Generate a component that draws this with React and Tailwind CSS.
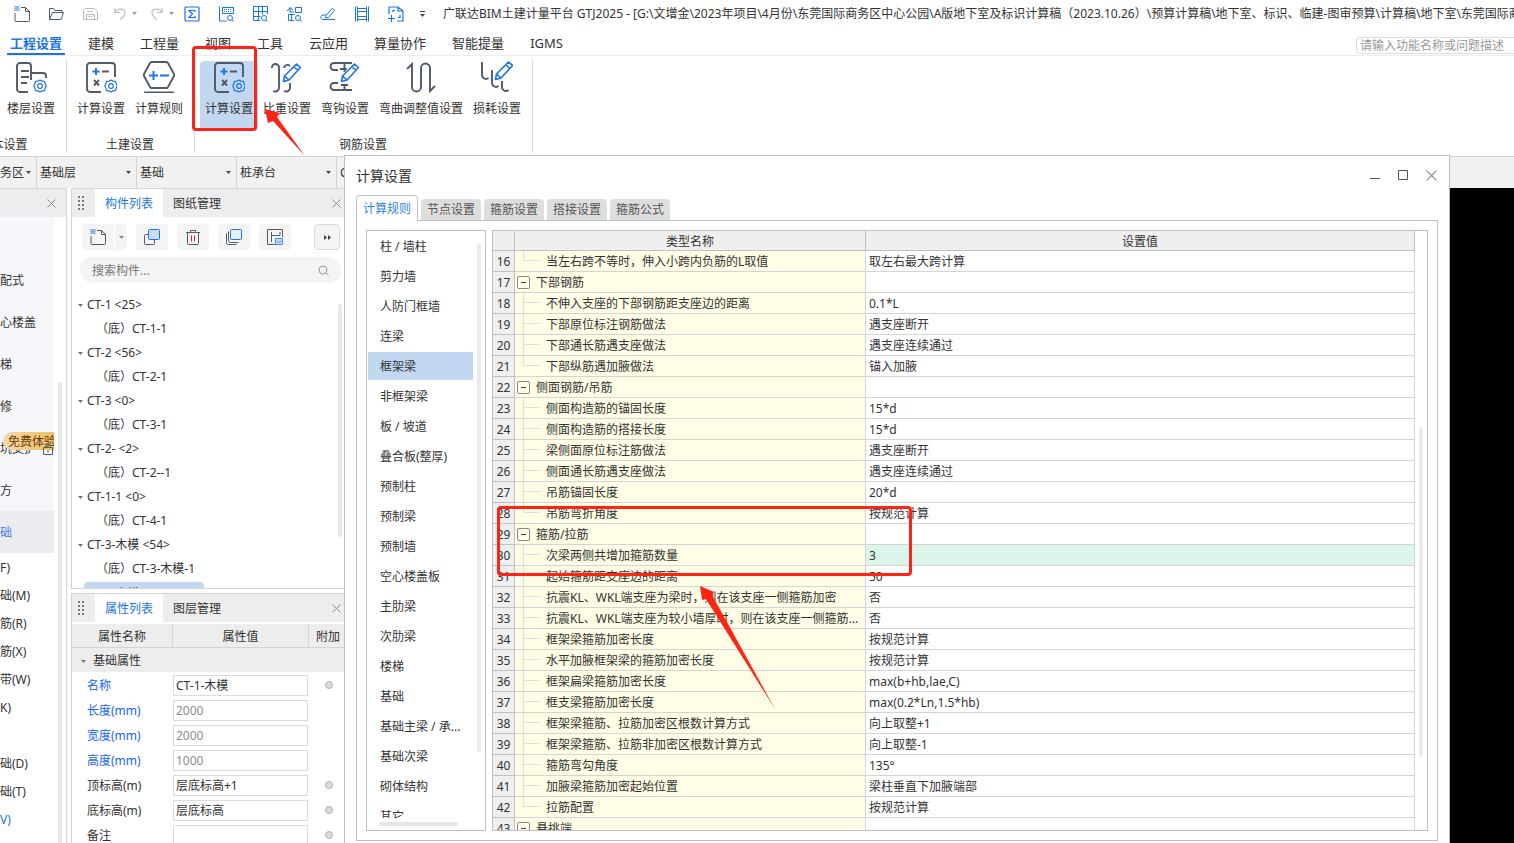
import React, { useState } from 'react';

const INK = '#505a6b';
const BLUE = '#1a73e8';

/* ---------- icons ---------- */

const Icon = ({ size = 16, box = 16, stroke = INK, width = 1, className = '', children }) => (
  <svg
    width={size}
    height={size}
    viewBox={`0 0 ${box} ${box}`}
    fill="none"
    stroke={stroke}
    strokeWidth={width}
    className={`shrink-0 ${className}`}
    aria-hidden="true"
  >
    {children}
  </svg>
);

const Caret = ({ className = '' }) => (
  <svg width="5" height="3" viewBox="0 0 5 3" className={`shrink-0 ${className}`} aria-hidden="true">
    <path d="M0 0h5L2.5 3z" fill="currentColor" />
  </svg>
);

const CloseIcon = ({ size = 9 }) => (
  <Icon size={size} box={9} stroke="#8c8c8c"><path d="M.5 .5l8 8M8.5 .5l-8 8" /></Icon>
);

const Grip = () => (
  <svg width="7" height="15" viewBox="0 0 7 15" fill="#7a7a7a" className="shrink-0" aria-hidden="true">
    {[0, 4, 8, 12].map(y => (
      <g key={y}><rect x="0" y={y} width="2" height="2" /><rect x="4" y={y} width="2" height="2" /></g>
    ))}
  </svg>
);

const NewIcon = () => (
  <Icon>
    <path d="M7 1.5h4.500l4 4v9a1 1 0 0 1-1 1H2a1 1 0 0 1-1-1V7M11.5 1.5v4h4" />
    <path d="M.5 .5h1M2.5 .5h1M4.5 .5h1M1.5 1.5h1M3.5 1.5h1M.5 2.5h1M2.5 2.5h1M4.5 2.5h1M1.5 3.5h1M3.5 3.5h1M.5 4.5h1M2.5 4.5h1M4.5 4.5h1" stroke={BLUE} />
  </Icon>
);
const OpenIcon = () => (
  <Icon><path d="M1.5 13.5v-11h4l1.5 2h7v2M1.5 13.5l3-7h11l-2.5 7z" strokeLinejoin="round" /></Icon>
);
const SaveIcon = () => (
  <Icon stroke="#bdbdbd"><path d="M3.5 2.5h9l3 3v8h-14v-9zM4.5 13.5v-5h8v5M5 5.5h6M6.5 10.5h4" /></Icon>
);
const UndoIcon = () => (
  <Icon stroke="#bdbdbd" width={1.2}><path d="M3 2v4.5h5M3 6.5C5 2.5 13 1.5 13 7c0 3-2.500 4.500-5 6.500" /></Icon>
);
const RedoIcon = () => (
  <Icon stroke="#bdbdbd" width={1.2}><path d="M13 2v4.500H8M13 6.500C11 2.500 3 1.500 3 7c0 3 2.500 4.500 5 6.500" /></Icon>
);
const SumIcon = () => (
  <Icon stroke={BLUE} width={1.2}><rect x="1" y="1" width="14" height="14" rx="1" /><path d="M11 6V4.500H5L8.500 8 5 11.500h6V10" /></Icon>
);
const SheetFindIcon = () => (
  <Icon stroke={BLUE}>
    <path d="M1.500 .5v14.500h7M4.500 1.500h11v6h-11zM6 3.500h1M8 3.500h1M10 3.500h1M12 3.500h1M6 5.500h1M8 5.500h1M10 5.500h1M12 5.500h1" />
    <circle cx="12" cy="12" r="2.500" /><path d="M14 14l1.500 1.500" />
  </Icon>
);
const GridFindIcon = () => (
  <Icon stroke={BLUE}>
    <path d="M8 14.500H1.500v-14h14V8M1.500 5.500h14M1.500 10.500h7M6.500 .5v14M10.500 .5v8" />
    <circle cx="12" cy="12" r="2.500" /><path d="M14 14l1.500 1.500" />
  </Icon>
);
const RebarFindIcon = () => (
  <Icon stroke={BLUE}>
    <path d="M8 14.500H2.500v-6h6M5.500 8.500v6M9.500 1.500h6v5h-6zM1 5l3-3 3 2M4 1v5h4" />
    <circle cx="12" cy="12" r="2.500" /><path d="M14 14l1.500 1.500" />
  </Icon>
);
const PenIcon = () => (
  <Icon stroke={BLUE}><path d="M12 2.500l2.500 2-6 7-3 .5.5-2.500zM6 9H3c-3 0-3 4.500 0 4.500h12" /></Icon>
);
const BeamIcon = () => (
  <Icon stroke={BLUE}><path d="M1.500 .5v15M3.500 .5v15M12.500 .5v15M14.500 .5v15M3.500 2.500h9M3.500 5.500h9M3.500 10.500h9M3.500 13.500h9" /></Icon>
);
const FrameIcon = () => (
  <Icon stroke={BLUE} width={1.200}><path d="M1 8V1h9l5 4v10H9M3.500 9v7M0 12.500h7M5 6V4.500h2M12 9v2.500h-2M10 1v4h5" /></Icon>
);

const Gear = ({ x, y }) => (
  <g transform={`translate(${x} ${y})`} stroke={BLUE} strokeWidth="1.2">
    <path d="M-2-4.900L0-6l2 1.100 2.500.3.7 2.400L6.200 0 5.200 2.200l-.7 2.400L2 4.900 0 6l-2-1.100-2.500-.3-.7-2.400L-6.200 0l1-2.200.7-2.400z" strokeLinejoin="round" />
    <circle r="2.300" />
  </g>
);
const Pencil = ({ x, y }) => (
  <g transform={`translate(${x} ${y})`} stroke={BLUE} strokeWidth="1.6" strokeLinejoin="round">
    <path d="M13.500 0l4 3.500L6 16l-5.500 1.500L1.500 12zM11 3l4 3.500M1.500 12L6 16" />
  </g>
);

const FloorIcon = () => (
  <Icon size={32} box={32} width={1.900}>
    <path d="M13 31H5a3 3 0 0 1-3-3V5a3 3 0 0 1 3-3h8a3 3 0 0 1 3 3v14M16 12h12a3 3 0 0 1 3 3v2M6 10h8M6 16h8M6 22h6" />
    <Gear x={25} y={25} />
  </Icon>
);
const CalcIcon = () => (
  <Icon size={32} box={32} width={1.900}>
    <path d="M16 31H5a3 3 0 0 1-3-3V5a3 3 0 0 1 3-3h22a3 3 0 0 1 3 3v11M17 10.500h7M9 19l5 5.500M14 19l-5 5.500" />
    <path d="M7.500 10.500h7M11 7v7" stroke={BLUE} />
    <Gear x={26} y={25} />
  </Icon>
);
const RuleIcon = () => (
  <Icon size={32} box={32} width={1.900}>
    <path d="M9 2h14a2 2 0 0 1 2 1l6 11a2 2 0 0 1 0 2l-6 11a2 2 0 0 1-2 1H9a2 2 0 0 1-2-1L1 16a2 2 0 0 1 0-2L7 3a2 2 0 0 1 2-1zM1 32.500h30" transform="translate(0 -1)" />
    <path d="M6 14.500h9M10.500 10v9M17 14.500h9" stroke={BLUE} />
  </Icon>
);
const WeightIcon = () => (
  <Icon size={32} box={32} width={1.900}>
    <path d="M1 7a3.500 3.500 0 0 1 7-1v20a4 4 0 0 1-6 4M13 7a3.500 3.500 0 0 1 6-2M19 22v4a4 4 0 0 1-6 4" />
    <Pencil x={12} y={3} />
  </Icon>
);
const HookIcon = () => (
  <Icon size={32} box={32} width={1.900}>
    <path d="M9 9H5a3.500 3.500 0 0 1 0-7h18M15.500 3v8M11 8h7M9 22H5a3.500 3.500 0 0 0 0 7h18M15.500 29v-5M12 24h7" />
    <Pencil x={12} y={3} />
  </Icon>
);
const BendIcon = () => (
  <Icon size={32} box={32} width={1.900}>
    <path d="M2 8l5-5v23a4.500 4.500 0 0 0 9 0V7a4.500 4.500 0 0 1 9 0v23l5-5" />
  </Icon>
);
const LossIcon = () => (
  <Icon size={32} box={32} width={1.900}>
    <path d="M1 1v13a4 4 0 0 0 6.500 3M11 9v13a4 4 0 0 0 6.500 3M21 20v7a4 4 0 0 0 6.500 2" />
    <Pencil x={14} y={1} />
  </Icon>
);

const CopyIcon = () => (
  <Icon><path d="M5 5.500H1.500a1 1 0 0 0-1 1v8a1 1 0 0 0 1 1h8a1 1 0 0 0 1-1V11" /><rect x="4.500" y=".5" width="11" height="10" rx="1" fill="#c9dcf8" stroke={BLUE} /></Icon>
);
const TrashIcon = () => (
  <Icon><path d="M1 3.500h14M5.500 3V1.500h5V3M2.500 4v10.500a1 1 0 0 0 1 1h9a1 1 0 0 0 1-1V4" /><path d="M6.500 6.500v6M9.500 6.500v6" stroke="#e02020" /></Icon>
);
const LayersIcon = () => (
  <Icon><path d="M.5 4.500v9a2 2 0 0 0 2 2h8M2.500 2.500v9a2 2 0 0 0 2 2h8" /><rect x="4.500" y=".5" width="11" height="10" rx="1" fill="#e3f0ff" stroke={BLUE} /></Icon>
);
const StoreIcon = () => (
  <Icon><path d="M8 15.500H.5V.5h15V8M4.500 3v10M4.500 6.500H13V3" /><path d="M8.500 9.500h7v6h-7zM10 12l2 1.500 2-1.500" stroke="#3b8cf0" fill="#c9dcf8" /></Icon>
);

/* ---------- data ---------- */

const MENUS = ['工程设置', '建模', '工程量', '视图', '工具', '云应用', '算量协作', '智能提量', 'IGMS'];

const CATEGORIES = [
  '柱 / 墙柱', '剪力墙', '人防门框墙', '连梁', '框架梁', '非框架梁', '板 / 坡道', '叠合板(整厚)', '预制柱', '预制梁',
  '预制墙', '空心楼盖板', '主肋梁', '次肋梁', '楼梯', '基础', '基础主梁 / 承...', '基础次梁', '砌体结构', '其它'
];

const RULES = [
  { name: '当左右跨不等时，伸入小跨内负筋的L取值', value: '取左右最大跨计算', last: true },
  { name: '下部钢筋', group: true },
  { name: '不伸入支座的下部钢筋距支座边的距离', value: '0.1*L' },
  { name: '下部原位标注钢筋做法', value: '遇支座断开' },
  { name: '下部通长筋遇支座做法', value: '遇支座连续通过' },
  { name: '下部纵筋遇加腋做法', value: '锚入加腋', last: true },
  { name: '侧面钢筋/吊筋', group: true },
  { name: '侧面构造筋的锚固长度', value: '15*d' },
  { name: '侧面构造筋的搭接长度', value: '15*d' },
  { name: '梁侧面原位标注筋做法', value: '遇支座断开' },
  { name: '侧面通长筋遇支座做法', value: '遇支座连续通过' },
  { name: '吊筋锚固长度', value: '20*d' },
  { name: '吊筋弯折角度', value: '按规范计算', last: true },
  { name: '箍筋/拉筋', group: true },
  { name: '次梁两侧共增加箍筋数量', value: '3', active: true },
  { name: '起始箍筋距支座边的距离', value: '50' },
  { name: '抗震KL、WKL端支座为梁时，则在该支座一侧箍筋加密', value: '否' },
  { name: '抗震KL、WKL端支座为较小墙厚时，则在该支座一侧箍筋...', value: '否' },
  { name: '框架梁箍筋加密长度', value: '按规范计算' },
  { name: '水平加腋框架梁的箍筋加密长度', value: '按规范计算' },
  { name: '框架扁梁箍筋加密长度', value: 'max(b+hb,lae,C)' },
  { name: '框支梁箍筋加密长度', value: 'max(0.2*Ln,1.5*hb)' },
  { name: '框架梁箍筋、拉筋加密区根数计算方式', value: '向上取整+1' },
  { name: '框架梁箍筋、拉筋非加密区根数计算方式', value: '向上取整-1' },
  { name: '箍筋弯勾角度', value: '135°' },
  { name: '加腋梁箍筋加密起始位置', value: '梁柱垂直下加腋端部' },
  { name: '拉筋配置', value: '按规范计算', last: true },
  { name: '悬挑端', group: true }
];

const COMPONENTS = [
  ['CT-1 <25>', '（底）CT-1-1'],
  ['CT-2 <56>', '（底）CT-2-1'],
  ['CT-3 <0>', '（底）CT-3-1'],
  ['CT-2- <2>', '（底）CT-2--1'],
  ['CT-1-1 <0>', '（底）CT-4-1'],
  ['CT-3-木模 <54>', '（底）CT-3-木模-1']
];

const PROPS = [
  { id: 'name', label: '名称', value: 'CT-1-木模', key: true, dot: true },
  { id: 'length', label: '长度(mm)', value: '2000', key: true, muted: true },
  { id: 'width', label: '宽度(mm)', value: '2000', key: true, muted: true },
  { id: 'height', label: '高度(mm)', value: '1000', key: true, muted: true },
  { id: 'top', label: '顶标高(m)', value: '层底标高+1', dot: true },
  { id: 'bottom', label: '底标高(m)', value: '层底标高', dot: true },
  { id: 'remark', label: '备注', value: '', dot: true }
];

/* ---------- header ---------- */

const QuickBar = () => (
  <div className="flex h-[27px] items-center overflow-hidden whitespace-nowrap pl-[14px]">
    <div className="flex shrink-0 items-center gap-[18px]">
      <button aria-label="新建"><NewIcon /></button>
      <button aria-label="打开"><OpenIcon /></button>
      <button aria-label="保存"><SaveIcon /></button>
    </div>
    <div className="ml-[14px] flex shrink-0 items-center gap-3 text-[#999]">
      <button aria-label="撤销" className="flex items-center gap-1"><UndoIcon /><Caret /></button>
      <button aria-label="恢复" className="flex items-center gap-1"><RedoIcon /><Caret /></button>
    </div>
    <div className="ml-[10px] flex shrink-0 items-center gap-[18px]">
      <button aria-label="汇总计算"><SumIcon /></button>
      <button aria-label="查看报表"><SheetFindIcon /></button>
      <button aria-label="查看工程量"><GridFindIcon /></button>
      <button aria-label="查看钢筋量"><RebarFindIcon /></button>
      <button aria-label="编辑"><PenIcon /></button>
      <button aria-label="钢筋三维"><BeamIcon /></button>
      <button aria-label="识别"><FrameIcon /></button>
    </div>
    <button aria-label="更多" className="ml-4 flex w-[5px] shrink-0 flex-col gap-[2px] text-[#444]">
      <span className="h-px w-full bg-[#444]" />
      <Caret />
    </button>
    <span className="ml-[18px]">
      广联达BIM土建计量平台 GTJ2025 - [G:\文增金\2023年项目\4月份\东莞国际商务区中心公园\A版地下室及标识计算稿（2023.10.26）\预算计算稿\地下室、标识、临建-图审预算\计算稿\地下室\东莞国际商务区
    </span>
  </div>
);

const MenuBar = () => (
  <nav className="flex h-[29px] items-end justify-between border-b border-[#ececec]">
    <div className="flex h-full items-stretch gap-5 pl-[7px] text-[13px]">
      {MENUS.map((m, i) => (
        <button
          key={m}
          className={i === 0 ? 'border-b-2 border-[#1a73e8] px-[3px] pt-[7px] font-bold text-[#1a73e8]' : 'border-b-2 border-transparent px-[3px] pt-[7px]'}
        >
          {m}
        </button>
      ))}
    </div>
    <input
      aria-label="功能搜索"
      placeholder="请输入功能名称或问题描述"
      className="mb-px h-[17px] w-[158px] rounded-l-sm border border-r-0 border-[#dcdcdc] pl-[3px] text-[12px] placeholder:text-[#999]"
    />
  </nav>
);

const Tool = ({ icon, label, active }) => (
  <button className={`flex h-[70px] shrink-0 flex-col items-center gap-[6px] rounded-sm px-[5px] ${active ? 'bg-[#c1d8f0]' : ''}`}>
    {icon}
    <span className="leading-5">{label}</span>
  </button>
);

const ToolGroup = ({ title, className = '', children }) => (
  <section className={`flex shrink-0 flex-col justify-between border-r border-[#dcdcdc] pr-[6px] pl-[5px] ${className}`}>
    <div className="flex justify-end pt-[2px]">{children}</div>
    <h2 className="text-center leading-4">{title}</h2>
  </section>
);

const Ribbon = () => (
  <div className="flex h-[100px] items-start overflow-hidden pt-[3px]">
    <div className="flex h-[94px]">
      <ToolGroup title="基本设置" className="-ml-[58px] w-[125px]">
        <Tool icon={<FloorIcon />} label="楼层设置" />
      </ToolGroup>
      <ToolGroup title="土建设置">
        <Tool icon={<CalcIcon />} label="计算设置" />
        <Tool icon={<RuleIcon />} label="计算规则" />
      </ToolGroup>
      <ToolGroup title="钢筋设置">
        <Tool icon={<CalcIcon />} label="计算设置" active />
        <Tool icon={<WeightIcon />} label="比重设置" />
        <Tool icon={<HookIcon />} label="弯钩设置" />
        <Tool icon={<BendIcon />} label="弯曲调整值设置" />
        <Tool icon={<LossIcon />} label="损耗设置" />
      </ToolGroup>
    </div>
  </div>
);

const Picker = ({ label, value, className = 'w-[100px]' }) => (
  <div className={`flex shrink-0 items-center border-r border-[#d4d4d4] pr-[5px] ${className}`}>
    <select aria-label={label} className="h-full min-w-0 flex-1 appearance-none bg-transparent pl-[3px]">
      <option>{value}</option>
    </select>
    <Caret className="text-[#444]" />
  </div>
);

const PickerBar = () => (
  <div className="flex h-8 shrink-0 border-t border-[#d4d4d4] bg-[#f1f1f1]">
    <Picker label="区域" value="务区" className="-ml-[3px] w-10" />
    <Picker label="楼层" value="基础层" />
    <Picker label="构件类型" value="基础" />
    <Picker label="构件" value="桩承台" />
    <Picker label="名称" value="CT-1-木模" />
  </div>
);

/* ---------- side panels ---------- */

const NavPanel = () => (
  <aside className="flex w-[67px] shrink-0 flex-col overflow-hidden whitespace-nowrap border-r border-t border-[#d4d4d4]">
    <div className="flex h-7 shrink-0 items-center justify-end bg-[#ededef] pr-[10px]">
      <button aria-label="关闭导航"><CloseIcon /></button>
    </div>
    <div className="flex flex-1">
      <div className="w-[54px] shrink-0">
        <div className="bg-[#f5f7fa] pt-[42px]">
          {['配式', '心楼盖', '梯', '修'].map(t => <div key={t} className="h-[42px] leading-[44px]">{t}</div>)}
          <div className="relative h-[42px] leading-[44px]">
            坑支护
            <span className="absolute top-[5px] right-0 h-[18px] w-[51px] overflow-hidden rounded-l-full bg-linear-to-r from-[#f6d9a8] to-[#ecbf62] pl-[5px] text-[12px] leading-[20px] text-[#6b3d0c]">免费体验</span>
            <Icon size={12} box={12} className="absolute right-0 bottom-[14px]"><path d="M1.500 4.500h9v7h-9zM3.500 4.500v-1a2.500 2.500 0 0 1 5 0v1M6 7v2.500" /></Icon>
          </div>
          <div className="h-[42px] leading-[44px]">方</div>
        </div>
        <div className="h-[42px] bg-[#ebecf0] leading-[44px] text-[#4a7de0]">础</div>
        {['F)', '础(M)', '筋(R)', '筋(X)', '带(W)', 'K)', '', '础(D)', '础(T)'].map((t, i) => (
          <div key={i} className="h-7 leading-[30px]">{t}</div>
        ))}
        <div className="h-7 leading-[30px] text-[#1a73e8]">V)</div>
      </div>
      <div className="mt-[165px] ml-1 w-1 rounded-t bg-[#e8e8e8]" />
    </div>
  </aside>
);

const PanelTabs = ({ tabs }) => (
  <div className="flex h-7 shrink-0 items-center bg-[#ededef] pr-[3px] pl-[6px]">
    <Grip />
    <div className="ml-[10px] flex h-full flex-1">
      {tabs.map((t, i) => (
        <button key={t} className={i === 0 ? 'bg-white px-[10px] pt-[2px] text-[#1a73e8]' : 'px-[10px] pt-[2px]'}>{t}</button>
      ))}
    </div>
    <button aria-label="关闭"><CloseIcon /></button>
  </div>
);

const SmallTool = ({ label, className = 'w-8 rounded', children }) => (
  <button aria-label={label} className={`flex h-[26px] items-center justify-center bg-[#f4f4f4] ${className}`}>{children}</button>
);

const ComponentPanel = () => (
  <section className="flex h-[401px] shrink-0 flex-col border border-r-0 border-[#d4d4d4] bg-white">
    <PanelTabs tabs={['构件列表', '图纸管理']} />
    <div className="mt-[7px] flex items-center gap-[9px] pr-1 pl-[10px]">
      <div className="flex gap-px">
        <SmallTool label="新建构件" className="w-8 rounded-l"><NewIcon /></SmallTool>
        <SmallTool label="新建选项" className="w-3 rounded-r text-[#888]"><Caret /></SmallTool>
      </div>
      <SmallTool label="复制"><CopyIcon /></SmallTool>
      <SmallTool label="删除"><TrashIcon /></SmallTool>
      <SmallTool label="层间复制"><LayersIcon /></SmallTool>
      <SmallTool label="存档"><StoreIcon /></SmallTool>
      <SmallTool label="更多" className="ml-auto w-[26px] rounded border border-[#dcdcdc]">
        <svg width="7" height="5" viewBox="0 0 7 5" fill="#444" aria-hidden="true"><path d="M0 0l3 2.500L0 5zM4 0l3 2.500L4 5z" /></svg>
      </SmallTool>
    </div>
    <div className="mt-[7px] mr-[3px] ml-2 flex h-[26px] shrink-0 items-center rounded-full bg-[#f4f4f4] pr-3 pl-3">
      <input aria-label="搜索构件" placeholder="搜索构件..." className="min-w-0 flex-1 bg-transparent pt-[2px] placeholder:text-[#777]" />
      <Icon size={11} box={11} stroke="#999"><circle cx="5" cy="5" r="4" /><path d="M8 8l2.500 2.500" /></Icon>
    </div>
    <div className="mt-[10px] flex min-h-0 flex-1 overflow-hidden">
      <ul className="flex-1">
        {COMPONENTS.map(([parent, child]) => (
          <li key={parent}>
            <div className="flex h-6 items-center gap-1 pl-[6px]"><Caret className="text-[#777]" />{parent}</div>
            <div className="flex h-6 items-center pl-6">{child}</div>
          </li>
        ))}
        <li className="mt-px ml-3 h-6 w-[120px] rounded bg-[#c1d8f0] pl-[3px] leading-6">CT-1-木模 &lt;9&gt;</li>
      </ul>
      <div className="mt-[11px] mr-[2px] h-[233px] w-1 rounded bg-[#e8e8e8]" />
    </div>
  </section>
);

const PropertyPanel = () => (
  <section className="mt-1 flex min-h-0 flex-1 flex-col overflow-hidden border-t border-l border-[#d4d4d4] bg-white">
    <PanelTabs tabs={['属性列表', '图层管理']} />
    <table className="mt-[2px] w-full table-fixed border-separate border-spacing-0">
      <colgroup><col className="w-[101px]" /><col className="w-[136px]" /><col /></colgroup>
      <thead className="bg-[#ededed]">
        <tr className="h-6">
          <th className="border-r border-b border-[#d4d4d4] pt-[2px] font-normal">属性名称</th>
          <th className="border-r border-b border-[#d4d4d4] pt-[2px] font-normal">属性值</th>
          <th className="border-b border-[#d4d4d4] pt-[2px] pl-[3px] font-normal whitespace-nowrap">附加</th>
        </tr>
      </thead>
      <tbody>
        <tr className="h-6 bg-[#ededed]">
          <td colSpan={3} className="pt-[2px]"><span className="flex items-center gap-[7px] pl-[9px]"><Caret className="text-[#777]" />基础属性</span></td>
        </tr>
        {PROPS.map(p => (
          <tr key={p.id} className="h-[25px]">
            <td className={p.key ? 'pt-[2px] pl-[15px] text-[#1463ff]' : 'pt-[2px] pl-[15px]'}><label htmlFor={p.id}>{p.label}</label></td>
            <td>
              <input
                id={p.id}
                defaultValue={p.value}
                className={`mt-px block h-[21px] w-[135px] border border-[#dcdcdc] pl-[2px] ${p.muted ? 'text-[#8c8c8c]' : ''}`}
              />
            </td>
            <td>{p.dot && <input type="checkbox" aria-label={`${p.label}附加`} className="ml-4 block h-2 w-2 appearance-none rounded-full border border-[#b0b0b0] bg-[#dcdcdc]" />}</td>
          </tr>
        ))}
      </tbody>
    </table>
  </section>
);

/* ---------- dialog ---------- */

const Branch = ({ last }) => (
  <span className="mr-[6px] ml-2 flex h-5 w-[17px] shrink-0 flex-col">
    <span className="h-[10px] border-b border-l border-[#dedede]" />
    <span className={last ? 'flex-1' : 'flex-1 border-l border-[#dedede]'} />
  </span>
);

const RuleTable = () => (
  <div className="flex min-w-0 flex-1 overflow-hidden border border-[#c0c0c4]">
    <div className="min-w-0 flex-1">
      <table className="w-full table-fixed border-separate border-spacing-0 whitespace-nowrap">
        <colgroup><col className="w-[22px]" /><col className="w-[351px]" /><col /></colgroup>
        <thead className="bg-[#efefef]">
          <tr className="h-5">
            <th className="border-r border-b border-[#c0c0c4]" aria-label="序号" />
            <th className="border-r border-b border-[#c0c0c4] pt-[2px] font-normal leading-[17px]">类型名称</th>
            <th className="border-r border-b border-[#c0c0c4] pt-[2px] font-normal leading-[17px]">设置值</th>
          </tr>
        </thead>
        <tbody>
          {RULES.map((r, i) => (
            <tr key={i} className="h-[21px]">
              <td className="border-r border-b border-[#c0c0c4] bg-[#efefef] pt-[2px] text-center leading-[18px]">{i + 16}</td>
              <td className="border-r border-b border-[#d4d4d4] bg-[#fffde5]">
                <span className="flex h-5 items-center overflow-hidden leading-[18px]">
                  {r.group ? (
                    <button aria-label="折叠" className="mr-[6px] ml-[2px] flex h-[13px] w-[13px] shrink-0 items-center justify-center rounded-xs border border-[#888] bg-[#fffde5]">
                      <span className="h-px w-[5px] bg-[#444]" />
                    </button>
                  ) : (
                    <Branch last={r.last} />
                  )}
                  <span className="pt-[2px]">{r.name}</span>
                </span>
              </td>
              <td className={`border-r border-b border-[#d4d4d4] pt-[2px] pl-[3px] leading-[18px] ${r.active ? 'bg-[#dcf5ea]' : ''}`}>{r.value}</td>
            </tr>
          ))}
        </tbody>
      </table>
    </div>
    <div className="w-3 shrink-0 pt-[196px] pl-1"><div className="h-[330px] w-1 rounded bg-[#ebebeb]" /></div>
  </div>
);

const CategoryList = () => {
  const [selected, setSelected] = useState('框架梁');
  return (
    <div className="flex w-[120px] shrink-0 flex-col border border-[#c0c0c4]">
      <div className="flex min-h-0 flex-1 overflow-hidden">
        <ul className="flex w-[106px] flex-col gap-[2px] pt-px pl-px">
          {CATEGORIES.map(c => (
            <li key={c}>
              <button
                onClick={() => setSelected(c)}
                className={`block h-7 w-full pt-[2px] pl-3 text-left whitespace-nowrap ${c === selected ? 'bg-[#c1d8f0]' : ''}`}
              >
                {c}
              </button>
            </li>
          ))}
        </ul>
        <div className="mt-3 ml-1 h-[509px] w-1 rounded bg-[#ebebeb]" />
      </div>
      <div className="mt-1 mb-1 ml-3 h-1 w-[79px] shrink-0 rounded bg-[#e6e6e6]" />
    </div>
  );
};

const SettingsDialog = () => (
  <div role="dialog" aria-label="计算设置" className="absolute top-[155px] right-16 bottom-0 left-[344px] flex flex-col border border-b-0 border-[#bcbcbc] bg-white pr-[11px] pb-[2px] pl-[11px]">
    <div className="flex h-[38px] shrink-0 items-center justify-between pr-px">
      <h1 className="text-[14px]">计算设置</h1>
      <div className="flex gap-[18px]">
        <button aria-label="最小化"><Icon size={10} box={10} stroke="#555"><path d="M0 8.500h10" /></Icon></button>
        <button aria-label="最大化"><Icon size={10} box={10} stroke="#555"><path d="M.5 .5h9v9h-9z" /></Icon></button>
        <button aria-label="关闭对话框"><CloseIcon size={11} /></button>
      </div>
    </div>
    <div className="flex h-[26px] shrink-0 items-end gap-[3px]">
      <button className="relative -mb-px h-[26px] rounded-t border border-b-0 border-[#c0c0c4] bg-white px-[6px] pt-px text-[#2f83e4]">计算规则</button>
      {['节点设置', '箍筋设置', '搭接设置', '箍筋公式'].map(t => (
        <button key={t} className="h-[21px] rounded-t bg-[#dedede] px-[6px] pt-px text-[#555]">{t}</button>
      ))}
    </div>
    <div className="flex min-h-0 flex-1 gap-[6px] border border-[#c0c0c4] p-[9px]">
      <CategoryList />
      <RuleTable />
    </div>
  </div>
);

/* ---------- red markup ---------- */

const Arrow = ({ className, w, h, points }) => (
  <svg width={w} height={h} viewBox={`0 0 ${w} ${h}`} className={`pointer-events-none absolute ${className}`} aria-hidden="true">
    <polygon points={points} fill="#ff2314" />
  </svg>
);

const Markup = () => (
  <>
    <div className="pointer-events-none absolute top-[46px] left-[192px] h-[85px] w-[65px] rounded-sm border-3 border-[#ff2314]" />
    <Arrow className="top-[109px] left-[265px]" w={40} h={47} points="0,0 15,4 12,8 40,47 8,12 3,14" />
    <div className="pointer-events-none absolute top-[506px] left-[497px] h-[70px] w-[415px] rounded-sm border-3 border-[#ff2314]" />
    <Arrow className="top-[586px] left-[700px]" w={75} h={123} points="0,0 14,6 12,9 75,123 6,13 2,14" />
  </>
);

export default function App() {
  return (
    <div className="relative flex h-screen flex-col overflow-hidden bg-white font-['Noto_Sans','Noto_Sans_CJK_SC',sans-serif] text-[12px] text-[#333]">
      <header className="shrink-0">
        <QuickBar />
        <MenuBar />
        <Ribbon />
      </header>
      <PickerBar />
      <main className="flex min-h-0 flex-1">
        <NavPanel />
        <div className="ml-1 flex w-[273px] shrink-0 flex-col">
          <ComponentPanel />
          <PropertyPanel />
        </div>
        <div className="flex-1 bg-black" />
      </main>
      <SettingsDialog />
      <Markup />
    </div>
  );
}
